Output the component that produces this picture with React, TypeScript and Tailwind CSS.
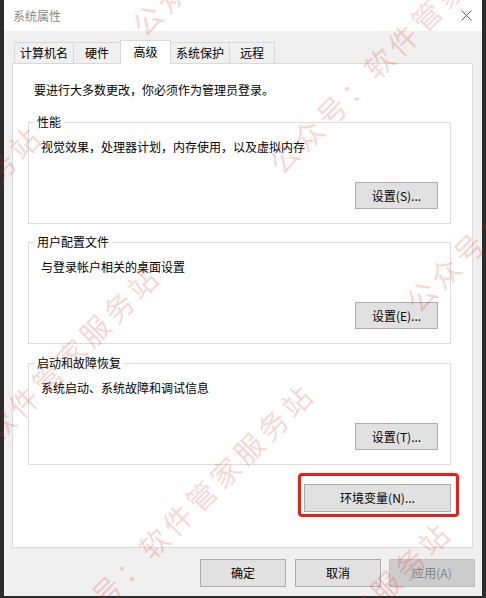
const marks = [
  "left-[146px] top-[19px]",
  "left-[-214px] top-[379px]",
  "left-[283px] top-[157px]",
  "left-[-96px] top-[519px]",
  "left-[420px] top-[295px]",
  "left-[58px] top-[637px]",
  "left-[195px] top-[775px]",
]

function Btn({ children, className = "" }: { children: React.ReactNode; className?: string }) {
  return (
    <button className={`flex items-center justify-center border border-[#adadad] bg-[#e1e1e1] leading-none text-black ${className}`}>
      {children}
    </button>
  )
}

function Group({ title, desc, button, className = "" }: { title: string; desc: string; button: string; className?: string }) {
  return (
    <fieldset className={`border border-[#dcdcdc] px-0 pt-0 pb-0 ${className}`}>
      <legend className="ml-[5px] px-[3px] leading-[16px]">{title}</legend>
      <div className="px-[12px] pt-[9px] pb-[14px]">
        <p className="leading-[16px]">{desc}</p>
        <div className="mt-[27px] flex justify-end">
          <Btn className="h-[27px] w-[83px]">{button}</Btn>
        </div>
      </div>
    </fieldset>
  )
}

export default function App() {
  return (
    <div className="relative h-[598px] w-[486px] overflow-hidden bg-[#2b2b2b] font-['Noto_Sans_CJK_SC',sans-serif] text-[12px] text-black">
      <div className="ml-[4px] flex h-[596px] w-[478px] flex-col bg-[#f0f0f0]">
        {/* title bar */}
        <div className="flex h-[31px] items-center justify-between bg-white pl-[9px] pr-[10px]">
          <span className="text-[#8a8a8a]">系统属性</span>
          <svg width="11" height="11" viewBox="0 0 11 11" className="mt-[-1px]">
            <path d="M0.5 0.5 L10.5 10.5 M10.5 0.5 L0.5 10.5" stroke="#5a5a5a" strokeWidth="1" />
          </svg>
        </div>

        <div className="pt-[9px]">
          {/* tabs */}
          <div className="ml-[10px] flex h-[24px] items-start">
            <div className="mt-[2px] flex h-[21px] w-[59px] items-center justify-center border-l border-t border-[#d9d9d9]">计算机名</div>
            <div className="mt-[2px] flex h-[21px] w-[47px] items-center justify-center border-l border-t border-[#d9d9d9]">硬件</div>
            <div className="relative z-10 flex h-[24px] w-[51px] justify-center border-x border-t border-[#d9d9d9] bg-white pt-[3px] leading-[16px]">高级</div>
            <div className="mt-[2px] flex h-[21px] w-[58px] items-center justify-center border-t border-[#d9d9d9]">系统保护</div>
            <div className="mt-[2px] flex h-[21px] w-[46px] items-center justify-center border-x border-t border-[#d9d9d9]">远程</div>
          </div>

          {/* panel */}
          <div className="ml-[8px] -mt-px flex w-[461px] flex-col border border-[#d9d9d9] bg-white pb-[30px] pl-[15px] pr-[21px] pt-[18px]">
            <p className="ml-[6px] leading-[16px]">要进行大多数更改，你必须作为管理员登录。</p>
            <Group className="mt-[16px]" title="性能" desc="视觉效果，处理器计划，内存使用，以及虚拟内存" button="设置(S)..." />
            <Group className="mt-[10px]" title="用户配置文件" desc="与登录帐户相关的桌面设置" button="设置(E)..." />
            <Group className="mt-[11px]" title="启动和故障恢复" desc="系统启动、系统故障和调试信息" button="设置(T)..." />
            <div className="-mr-[8px] mt-[8px] self-end rounded-[4px] border-[3px] border-[#e8201c] pb-[2px] pl-[3px] pr-[5px] pt-[8px]">
              <Btn className="h-[28px] w-[147px]">环境变量(N)...</Btn>
            </div>
          </div>

          {/* dialog buttons */}
          <div className="mt-[11px] flex justify-end pr-[7px]">
            <Btn className="h-[28px] w-[86px]">确定</Btn>
            <Btn className="ml-[9px] h-[28px] w-[86px]">取消</Btn>
            <button className="ml-[8px] flex h-[28px] w-[86px] items-center justify-center border border-[#bfbfbf] bg-[#cccccc] leading-none text-[#838383]">
              应用(A)
            </button>
          </div>
        </div>
      </div>

      {/* watermark */}
      <div className="pointer-events-none absolute inset-0">
        {marks.map((m) => (
          <div key={m} className={`absolute ${m}`}>
            <span className="absolute left-[-14.5px] top-[-14.5px] origin-[14.5px_14.5px] -rotate-45 whitespace-nowrap text-[29px] leading-[29px] tracking-[4.5px] text-[#e02020]/20">
              公众号：软件管家服务站
            </span>
          </div>
        ))}
      </div>
    </div>
  )
}
